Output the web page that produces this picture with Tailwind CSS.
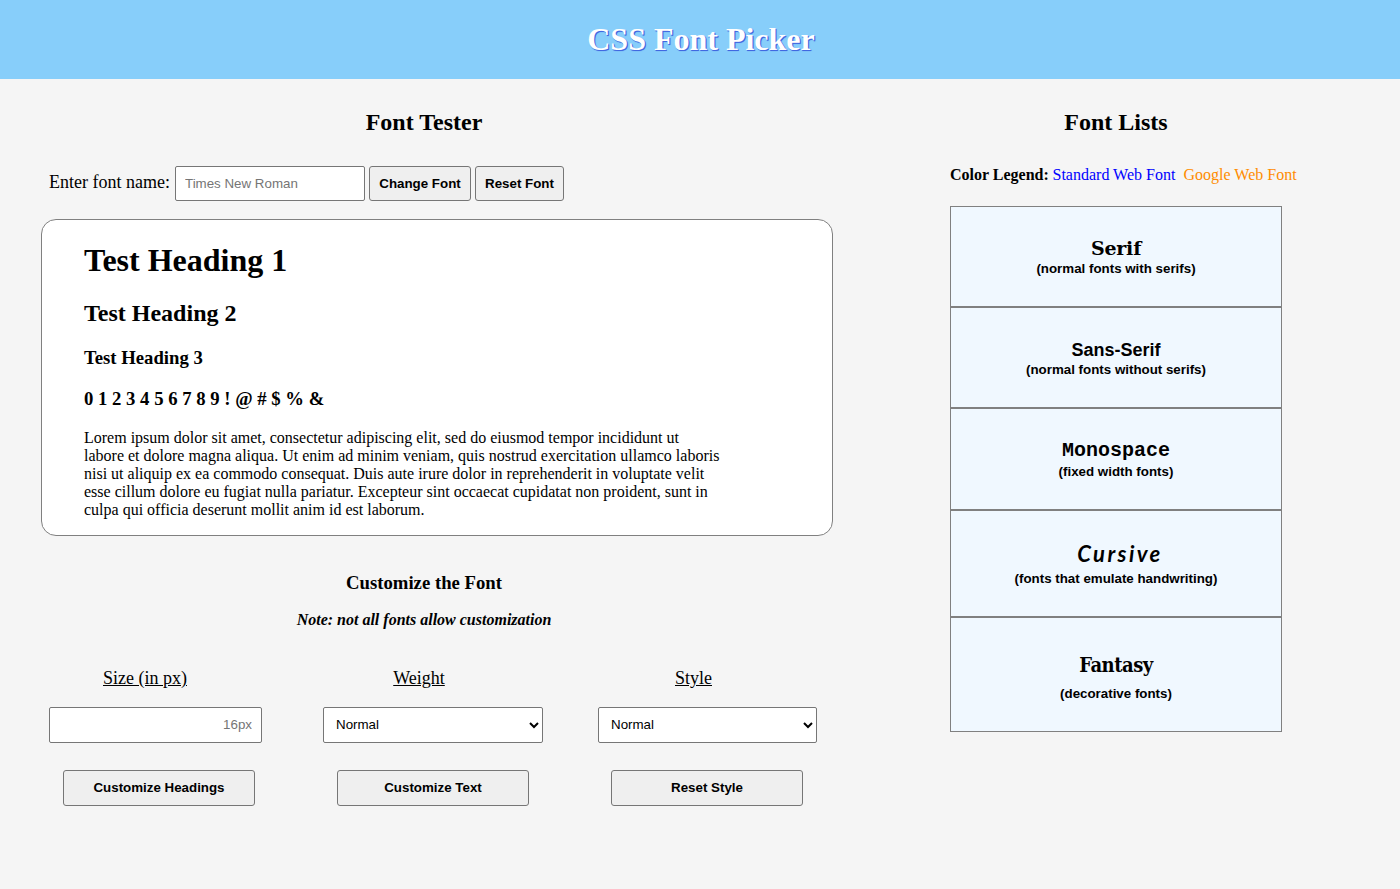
<!DOCTYPE html>
<html lang="en">
<head>
<meta charset="utf-8">
<title>CSS Font Picker</title>
<script src="https://cdn.jsdelivr.net/npm/@tailwindcss/browser@4"></script>
</head>
<body class="min-h-screen bg-[#f5f5f5] font-['Liberation_Serif','Times_New_Roman',serif] text-base text-black">
<header class="flex h-[79px] items-center justify-center bg-[#87cefa]">
  <h1 class="pl-0.5 text-[32px] leading-[37px] font-bold text-white [text-shadow:1px_1px_1px_#4169e1,1px_1px_#4169e1]">CSS Font Picker</h1>
</header>
<main class="flex">
  <section class="w-[848px] pt-[29px]">
    <h2 class="text-center text-2xl leading-7 font-bold">Font Tester</h2>
    <form class="mt-[30px] flex h-[35px] items-center gap-1 pl-[49px] font-['Liberation_Sans',Arial,sans-serif] text-[13.333px]">
      <label for="font" class="w-[122px] pb-1 font-['Liberation_Serif','Times_New_Roman',serif] text-lg leading-5 whitespace-nowrap">Enter font name:</label>
      <input id="font" type="text" placeholder="Times New Roman" class="h-[35px] w-[190px] rounded-xs border border-[#767676] bg-white px-[9px] placeholder:text-[#757575]">
      <button type="button" class="h-[35px] w-[102px] rounded-[3px] border border-[#767676] bg-[#efefef] font-bold whitespace-nowrap">Change Font</button>
      <button type="button" class="h-[35px] w-[89px] rounded-[3px] border border-[#767676] bg-[#efefef] font-bold whitespace-nowrap">Reset Font</button>
    </form>
    <article class="mt-[18px] ml-[41px] h-[317px] w-[792px] rounded-[15px] border border-[#808080] bg-white pt-[22px] pl-[42px]">
      <h1 class="text-[32px] leading-[37px] font-bold">Test Heading 1</h1>
      <h2 class="mt-5 text-2xl leading-7 font-bold">Test Heading 2</h2>
      <h3 class="mt-5 text-[18.72px] leading-[21px] font-bold">Test Heading 3</h3>
      <h3 class="mt-5 text-[18.72px] leading-[21px] font-bold">0 1 2 3 4 5 6 7 8 9 ! @ # $ % &amp;</h3>
      <p class="mt-5 leading-[18px] whitespace-nowrap">Lorem ipsum dolor sit amet, consectetur adipiscing elit, sed do eiusmod tempor incididunt ut<br>labore et dolore magna aliqua. Ut enim ad minim veniam, quis nostrud exercitation ullamco laboris<br>nisi ut aliquip ex ea commodo consequat. Duis aute irure dolor in reprehenderit in voluptate velit<br>esse cillum dolore eu fugiat nulla pariatur. Excepteur sint occaecat cupidatat non proident, sunt in<br>culpa qui officia deserunt mollit anim id est laborum.</p>
    </article>
    <h3 class="mt-9 text-center text-[18.72px] leading-[21px] font-bold">Customize the Font</h3>
    <h4 class="mt-[18px] text-center leading-[18px] font-bold italic">Note: not all fonts allow customization</h4>
    <div class="mt-[39px] ml-[49px] grid grid-cols-[274px_275px_219px] font-['Liberation_Sans',Arial,sans-serif] text-[13.333px]">
      <div>
        <label for="size" class="block w-48 text-center font-['Liberation_Serif','Times_New_Roman',serif] text-lg leading-5 underline">Size (in px)</label>
        <input id="size" type="text" placeholder="16px" class="mt-[19px] block h-9 w-[213px] rounded-xs border border-[#767676] bg-white px-[9px] pb-0.5 text-right placeholder:text-[#757575]">
        <button type="button" class="mt-[27px] ml-3.5 block h-9 w-48 rounded-[3px] border border-[#767676] bg-[#efefef] font-bold">Customize Headings</button>
      </div>
      <div>
        <label for="weight" class="block w-48 text-center font-['Liberation_Serif','Times_New_Roman',serif] text-lg leading-5 underline">Weight</label>
        <select id="weight" class="mt-[19px] block h-9 w-[220px] rounded-xs border border-[#767676] bg-white pb-0.5 pl-2"><option>Normal</option></select>
        <button type="button" class="mt-[27px] ml-3.5 block h-9 w-48 rounded-[3px] border border-[#767676] bg-[#efefef] font-bold">Customize Text</button>
      </div>
      <div>
        <label for="style" class="block w-[191px] text-center font-['Liberation_Serif','Times_New_Roman',serif] text-lg leading-5 underline">Style</label>
        <select id="style" class="mt-[19px] block h-9 w-[219px] rounded-xs border border-[#767676] bg-white pb-0.5 pl-2"><option>Normal</option></select>
        <button type="button" class="mt-[27px] ml-[13px] block h-9 w-48 rounded-[3px] border border-[#767676] bg-[#efefef] font-bold">Reset Style</button>
      </div>
    </div>
  </section>
  <section class="ml-[102px] w-[332px] pt-[29px]">
    <h2 class="text-center text-2xl leading-7 font-bold">Font Lists</h2>
    <p class="mt-[30px] flex leading-[18px] whitespace-nowrap"><b class="w-[102.5px] shrink-0">Color Legend:</b><span class="w-[131px] shrink-0 text-[#0000ff]">Standard Web Font</span><span class="text-[#ff8c00]">Google Web Font</span></p>
    <div class="mt-[22px] flex flex-col font-['Liberation_Sans',Arial,sans-serif] text-[13.333px] leading-[15px] font-bold">
      <button type="button" class="flex h-[101px] flex-col items-center border border-[#808080] bg-[#f0f8ff] pt-[29px]"><span class="h-[25px] font-['DejaVu_Serif',Georgia,serif] text-[19px] leading-6 tracking-[-0.2px]">Serif</span><span>(normal fonts with serifs)</span></button>
      <button type="button" class="flex h-[101px] flex-col items-center border border-[#808080] bg-[#f0f8ff] pt-[30px]"><span class="h-6 text-lg leading-6">Sans-Serif</span><span>(normal fonts without serifs)</span></button>
      <button type="button" class="flex h-[102px] flex-col items-center border border-[#808080] bg-[#f0f8ff] pt-[30px]"><span class="h-[25px] font-['Liberation_Mono','Courier_New',monospace] text-xl leading-6">Monospace</span><span>(fixed width fonts)</span></button>
      <button type="button" class="flex h-[107px] flex-col items-center border border-[#808080] bg-[#f0f8ff] pt-[31px]"><span class="h-[29px] pl-2 font-[Lato,cursive] text-[22px] leading-6 tracking-[2.4px] italic">Cursive</span><span>(fonts that emulate handwriting)</span></button>
      <button type="button" class="flex h-[115px] flex-col items-center border border-[#808080] bg-[#f0f8ff] pt-[35px]"><span class="h-[33px] font-['DejaVu_Serif_Condensed','DejaVu_Serif',fantasy] text-xl leading-6 tracking-[-0.5px]">Fantasy</span><span>(decorative fonts)</span></button>
    </div>
  </section>
</main>
</body>
</html>
